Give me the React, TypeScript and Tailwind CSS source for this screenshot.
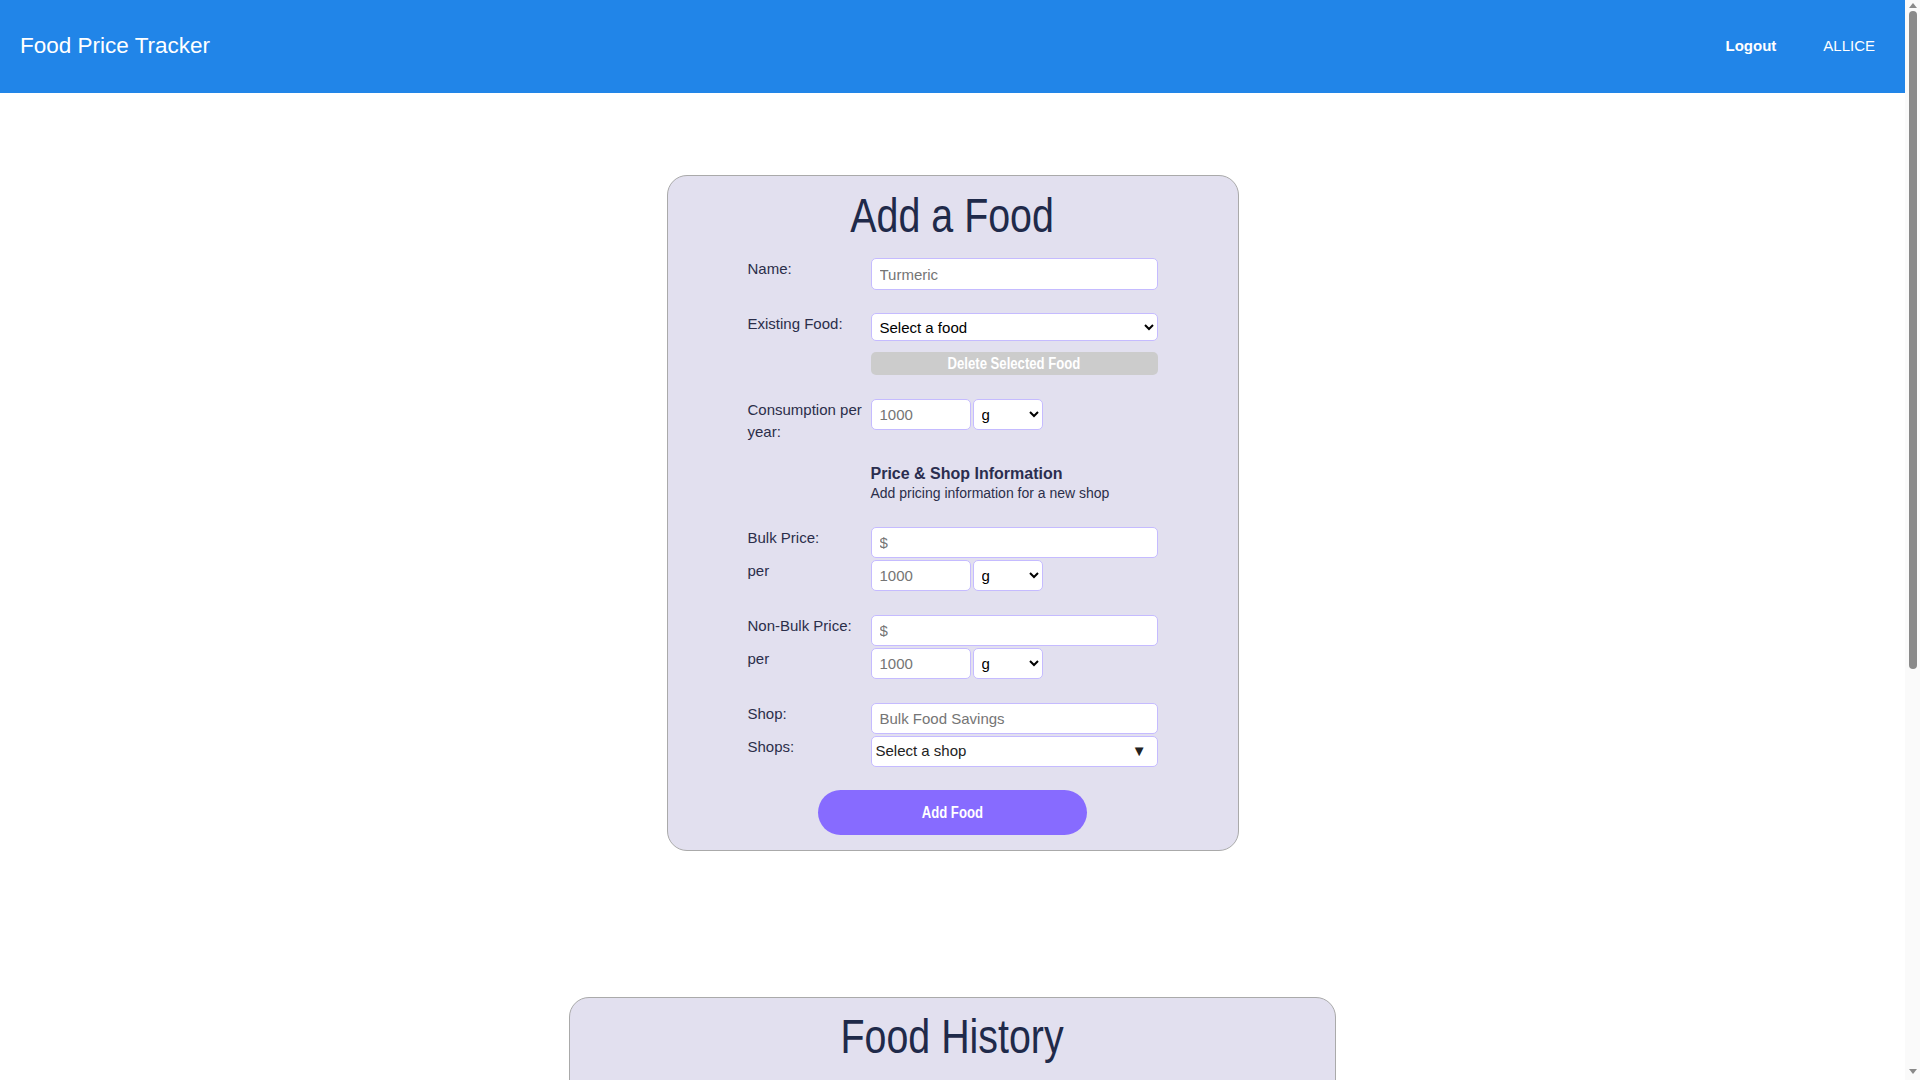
import React from "react";

const labelCls = "text-[15px] leading-[22px] text-[#2b2e4a]";
const inputCls =
  "block w-full h-[31px] bg-white border border-[#c5bbff] rounded-[5px] px-[8px] text-[15px] text-black placeholder:text-[#757575] outline-none";
const selectCls =
  "h-[31px] bg-white border border-[#c5bbff] rounded-[5px] pl-[4px] pr-[2px] text-[15px] text-black outline-none";

function UnitRow() {
  return (
    <div className="flex gap-[2px]">
      <input className={inputCls + " !w-[100px]"} placeholder="1000" />
      <select className={selectCls + " w-[70px]"} defaultValue="g">
        <option value="g">g</option>
        <option value="kg">kg</option>
        <option value="lb">lb</option>
      </select>
    </div>
  );
}

function FakeScrollbar() {
  return (
    <div className="fixed top-0 right-0 w-[15px] h-screen bg-[#fafafa] flex flex-col items-center">
      <svg width="8" height="5" viewBox="0 0 8 5" className="mt-[3px] shrink-0">
        <path d="M4 0 L8 5 L0 5 Z" fill="#8a8a8a" />
      </svg>
      <div className="mt-[3px] w-[8px] h-[658px] rounded-full bg-[#8a8a8a] shrink-0" />
      <svg width="8" height="5" viewBox="0 0 8 5" className="mt-auto mb-[6px] shrink-0">
        <path d="M0 0 L8 0 L4 5 Z" fill="#8a8a8a" />
      </svg>
    </div>
  );
}

export default function App() {
  return (
    <div className="min-h-[1720px] bg-white pr-[15px] font-['Liberation_Sans',Arial,sans-serif]">
      <header className="h-[93px] bg-[#2185e8] flex items-center justify-between pl-[20px] pr-[30px] text-white">
        <div className="text-[22.5px] -mt-[2px]">Food Price Tracker</div>
        <div className="flex items-center gap-[47px]">
          <button className="text-[15px] font-bold">Logout</button>
          <span className="text-[15px]">ALLICE</span>
        </div>
      </header>

      <section className="w-[572px] mx-auto mt-[82px] border border-[#aaaaaa] rounded-[20px] bg-[#e2e0ef] pt-[12px] pb-[15px]">
        <h1 className="text-center text-[48px] leading-[55px] text-[#1f2a4a]">
          <span className="inline-block scale-x-[0.82]">Add a Food</span>
        </h1>
        <div className="w-[410px] mx-auto mt-[15px]">
          <div className="grid grid-cols-[123px_287px] items-start">
            <label className={labelCls}>Name:</label>
            <input className={inputCls + " !h-[32px]"} placeholder="Turmeric" />
          </div>

          <div className="grid grid-cols-[123px_287px] items-start mt-[23px]">
            <label className={labelCls}>Existing Food:</label>
            <div>
              <select className={selectCls + " w-full !h-[28px]"} defaultValue="">
                <option value="">Select a food</option>
              </select>
              <button className="mt-[11px] w-full h-[23px] rounded-[5px] bg-[#cccccc] text-white font-bold text-[16px] leading-[23px]">
                <span className="inline-block scale-x-[0.82]">Delete Selected Food</span>
              </button>
            </div>
          </div>

          <div className="grid grid-cols-[123px_287px] items-start mt-[23px]">
            <label className={labelCls}>Consumption per year:</label>
            <UnitRow />
          </div>

          <div className="grid grid-cols-[123px_287px] mt-[21px]">
            <div />
            <div>
              <div className="text-[16px] leading-[19px] font-bold text-[#2b2e4f]">Price &amp; Shop Information</div>
              <div className="text-[14px] leading-[20px] text-[#2b2e4a]">Add pricing information for a new shop</div>
            </div>
          </div>

          <div className="grid grid-cols-[123px_287px] items-start mt-[24px] gap-y-[2px]">
            <label className={labelCls}>Bulk Price:</label>
            <input className={inputCls} placeholder="$" />
            <label className={labelCls}>per</label>
            <UnitRow />
          </div>

          <div className="grid grid-cols-[123px_287px] items-start mt-[24px] gap-y-[2px]">
            <label className={labelCls}>Non-Bulk Price:</label>
            <input className={inputCls} placeholder="$" />
            <label className={labelCls}>per</label>
            <UnitRow />
          </div>

          <div className="grid grid-cols-[123px_287px] items-start mt-[24px] gap-y-[2px]">
            <label className={labelCls}>Shop:</label>
            <input className={inputCls} placeholder="Bulk Food Savings" />
            <label className={labelCls}>Shops:</label>
            <div className="h-[31px] bg-white border border-[#c5bbff] rounded-[5px] pl-[4px] pr-[10px] flex items-center justify-between text-[15px] text-[#222222]">
              <span>Select a shop</span>
              <span className="text-[15px] text-[#222222]">▼</span>
            </div>
          </div>

          <div className="flex justify-center mt-[23px]">
            <button className="w-[269px] h-[45px] rounded-full bg-[#876bff] text-white font-bold text-[16px]">
              <span className="inline-block scale-x-[0.82]">Add Food</span>
            </button>
          </div>
        </div>
      </section>

      <section className="w-[767px] mx-auto mt-[146px] mb-[40px] min-h-[680px] border border-[#aaaaaa] rounded-[20px] bg-[#e2e0ef] pt-[11px]">
        <h2 className="text-center text-[48px] leading-[55px] text-[#1f2a4a]">
          <span className="inline-block scale-x-[0.82]">Food History</span>
        </h2>
      </section>

      <FakeScrollbar />
    </div>
  );
}
